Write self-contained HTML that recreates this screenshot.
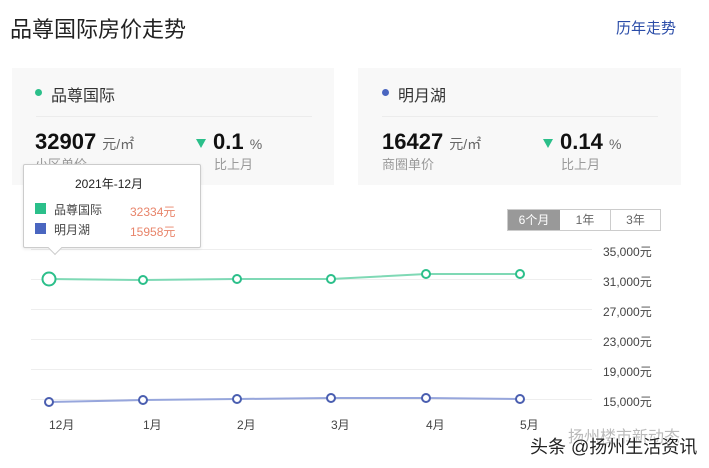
<!DOCTYPE html>
<html><head><meta charset="utf-8"><style>
*{margin:0;padding:0;box-sizing:border-box}
body{width:709px;height:468px;background:#fff;position:relative;overflow:hidden;font-family:"Liberation Sans","Noto Sans CJK SC",sans-serif;color:#222}
.a{position:absolute;white-space:nowrap}
.card{position:absolute;top:68px;height:117px;background:#f8f8f8}
.hr{position:absolute;height:1px;background:#ececec}
.big{font-size:22px;font-weight:bold;color:#111}
.u{font-size:14px;color:#666;font-weight:normal}
.sub{font-size:13px;color:#999}
.tri{width:0;height:0;border-left:5px solid transparent;border-right:5px solid transparent;border-top:9px solid #2bbf8a}
.yl{font-size:12px;color:#444}
.ml{font-size:12px;color:#444}
</style></head><body>
<div class="a" style="left:10px;top:12px;font-size:22px;color:#222">品尊国际房价走势</div>
<div class="a" style="left:616px;top:17px;font-size:15px;color:#2a4ca8">历年走势</div>

<div class="card" style="left:12px;width:322px"></div>
<div class="a" style="left:35px;top:89px;width:7px;height:7px;border-radius:50%;background:#2bbf8a"></div>
<div class="a" style="left:51px;top:82px;font-size:16px;color:#333">品尊国际</div>
<div class="hr" style="left:36px;top:116px;width:276px"></div>
<div class="a big" style="left:35px;top:129px">32907 <span class="u">元/㎡</span></div>
<div class="a sub" style="left:35px;top:154px">小区单价</div>
<div class="a tri" style="left:196px;top:139px"></div>
<div class="a big" style="left:213px;top:129px">0.1 <span class="u">%</span></div>
<div class="a sub" style="left:214px;top:154px">比上月</div>

<div class="card" style="left:358px;width:323px"></div>
<div class="a" style="left:382px;top:89px;width:7px;height:7px;border-radius:50%;background:#4a66c0"></div>
<div class="a" style="left:398px;top:82px;font-size:16px;color:#333">明月湖</div>
<div class="hr" style="left:382px;top:116px;width:276px"></div>
<div class="a big" style="left:382px;top:129px">16427 <span class="u">元/㎡</span></div>
<div class="a sub" style="left:382px;top:154px">商圈单价</div>
<div class="a tri" style="left:543px;top:139px"></div>
<div class="a big" style="left:560px;top:129px">0.14 <span class="u">%</span></div>
<div class="a sub" style="left:561px;top:154px">比上月</div>

<div class="a" style="left:507px;top:209px;width:154px;height:22px;border:1px solid #ccc;display:flex;font-size:12px">
<div style="width:52px;background:#999;color:#fff;text-align:center;line-height:20px">6个月</div>
<div style="width:51px;color:#666;text-align:center;line-height:20px;border-right:1px solid #ccc">1年</div>
<div style="flex:1;color:#666;text-align:center;line-height:20px">3年</div>
</div>

<svg class="a" style="left:0;top:0" width="709" height="468">
<g stroke="#eee" stroke-width="1">
<line x1="31" y1="249.5" x2="592" y2="249.5"/><line x1="31" y1="279.5" x2="592" y2="279.5"/>
<line x1="31" y1="309.5" x2="592" y2="309.5"/><line x1="31" y1="339.5" x2="592" y2="339.5"/>
<line x1="31" y1="369.5" x2="592" y2="369.5"/><line x1="31" y1="399.5" x2="592" y2="399.5"/>
</g>
<polyline fill="none" stroke="#7fd9b5" stroke-width="2" points="49,279 143,280 237,279 331,279 426,274 520,274"/>
<polyline fill="none" stroke="#97a6dc" stroke-width="2" points="49,402 143,400 237,399 331,398 426,398 520,399"/>
<g fill="#fff" stroke="#2bbf8a" stroke-width="2">
<circle cx="49" cy="279" r="6.5"/><circle cx="143" cy="280" r="4"/><circle cx="237" cy="279" r="4"/><circle cx="331" cy="279" r="4"/><circle cx="426" cy="274" r="4"/><circle cx="520" cy="274" r="4"/>
</g>
<g fill="#fff" stroke="#4a5eb0" stroke-width="2">
<circle cx="49" cy="402" r="4"/><circle cx="143" cy="400" r="4"/><circle cx="237" cy="399" r="4"/><circle cx="331" cy="398" r="4"/><circle cx="426" cy="398" r="4"/><circle cx="520" cy="399" r="4"/>
</g>
</svg>
<div class="a yl" style="left:603px;top:243px">35,000元</div>
<div class="a yl" style="left:603px;top:273px">31,000元</div>
<div class="a yl" style="left:603px;top:303px">27,000元</div>
<div class="a yl" style="left:603px;top:333px">23,000元</div>
<div class="a yl" style="left:603px;top:363px">19,000元</div>
<div class="a yl" style="left:603px;top:393px">15,000元</div>
<div class="a ml" style="left:49px;top:416px">12月</div>
<div class="a ml" style="left:143px;top:416px">1月</div>
<div class="a ml" style="left:237px;top:416px">2月</div>
<div class="a ml" style="left:331px;top:416px">3月</div>
<div class="a ml" style="left:426px;top:416px">4月</div>
<div class="a ml" style="left:520px;top:416px">5月</div>

<div class="a" style="left:23px;top:164px;width:178px;height:84px;background:#fff;border:1px solid #ccc;border-radius:2px;box-shadow:0 1px 3px rgba(0,0,0,.1)"></div>
<div class="a" style="left:50px;top:243px;width:10px;height:10px;background:#fff;border-right:1px solid #ccc;border-bottom:1px solid #ccc;transform:rotate(45deg)"></div>
<div class="a" style="left:75px;top:175px;font-size:12px;color:#222">2021年-12月</div>
<div class="a" style="left:35px;top:203px;width:11px;height:11px;background:#2bbf8a"></div>
<div class="a" style="left:54px;top:201px;font-size:12px;color:#444">品尊国际</div>
<div class="a" style="left:130px;top:203px;font-size:12px;color:#e8846a">32334元</div>
<div class="a" style="left:35px;top:223px;width:11px;height:11px;background:#4a66c0"></div>
<div class="a" style="left:54px;top:221px;font-size:12px;color:#444">明月湖</div>
<div class="a" style="left:130px;top:223px;font-size:12px;color:#e8846a">15958元</div>

<div class="a" style="left:568px;top:423px;font-size:16px;color:#bbb">扬州楼市新动态</div>
<div class="a" style="left:530px;top:433px;font-size:18px;color:#222;text-shadow:0 0 2px #fff,0 0 2px #fff">头条 @扬州生活资讯</div>
</body></html>
